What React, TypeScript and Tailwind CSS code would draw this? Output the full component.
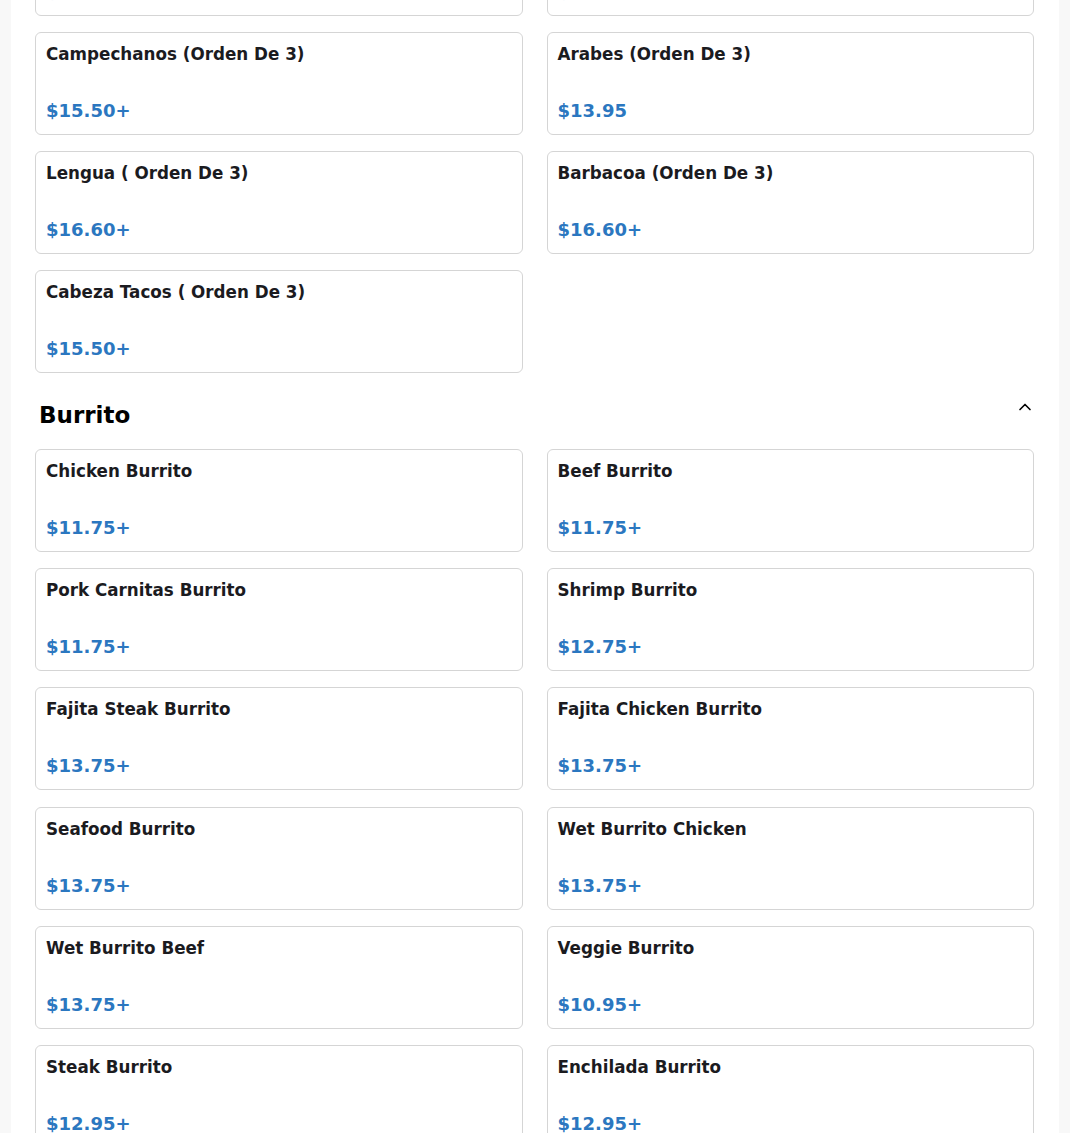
import React from 'react';
import { ChevronUp } from 'lucide-react';

type Item = { name: string; price: string };

const tacosTail: Item[] = [
  { name: 'Campechanos (Orden De 3)', price: '$15.50+' },
  { name: 'Arabes (Orden De 3)', price: '$13.95' },
  { name: 'Lengua ( Orden De 3)', price: '$16.60+' },
  { name: 'Barbacoa (Orden De 3)', price: '$16.60+' },
  { name: 'Cabeza Tacos ( Orden De 3)', price: '$15.50+' }
];

const burritos: Item[] = [
  { name: 'Chicken Burrito', price: '$11.75+' },
  { name: 'Beef Burrito', price: '$11.75+' },
  { name: 'Pork Carnitas Burrito', price: '$11.75+' },
  { name: 'Shrimp Burrito', price: '$12.75+' },
  { name: 'Fajita Steak Burrito', price: '$13.75+' },
  { name: 'Fajita Chicken Burrito', price: '$13.75+' },
  { name: 'Seafood Burrito', price: '$13.75+' },
  { name: 'Wet Burrito Chicken', price: '$13.75+' },
  { name: 'Wet Burrito Beef', price: '$13.75+' },
  { name: 'Veggie Burrito', price: '$10.95+' },
  { name: 'Steak Burrito', price: '$12.95+' },
  { name: 'Enchilada Burrito', price: '$12.95+' }
];

const MenuCard: React.FC<{ item: Item; faded?: boolean }> = ({ item, faded }) => (
  <div className="h-[103px] rounded-md border border-[#d5d5d5] bg-white px-[10px] pt-[9px] pb-[10px] flex flex-col justify-between">
    <div className={`text-[16.75px] leading-[24px] font-bold text-[#1b1b1f] ${faded ? 'opacity-0' : ''}`}>{item.name}</div>
    <div className={`text-[18px] leading-[26px] font-bold text-[#2b77c0] ${faded ? 'opacity-10' : ''}`}>{item.price}</div>
  </div>
);

const App: React.FC = () => {
  return (
    <div className="min-h-screen bg-[#f8f8f8] overflow-hidden" style={{ fontFamily: '"DejaVu Sans", Verdana, sans-serif' }}>
      <div className="mx-auto w-[1048px] bg-white pl-6 pr-[25px] pb-10">
        <div className="-mt-[87px] grid grid-cols-2 gap-x-6 gap-y-4">
          <MenuCard item={{ name: 'Pastor (Orden De 3)', price: '$15.50+' }} faded />
          <MenuCard item={{ name: 'Suadero (Orden De 3)', price: '$15.50+' }} faded />
          {tacosTail.map((item) => (
            <MenuCard key={item.name} item={item} />
          ))}
        </div>

        <div className="mt-[26px] mb-[18px] flex items-start justify-between pl-1">
          <h2 className="text-[23px] leading-[32px] font-bold text-black">Burrito</h2>
          <ChevronUp size={20} strokeWidth={2} className="mt-[-2px] mr-[-1px] text-black" />
        </div>

        <div className="grid grid-cols-2 gap-x-6 gap-y-[16.2px]">
          {burritos.map((item) => (
            <MenuCard key={item.name} item={item} />
          ))}
        </div>
      </div>
    </div>
  );
};

export default App;
